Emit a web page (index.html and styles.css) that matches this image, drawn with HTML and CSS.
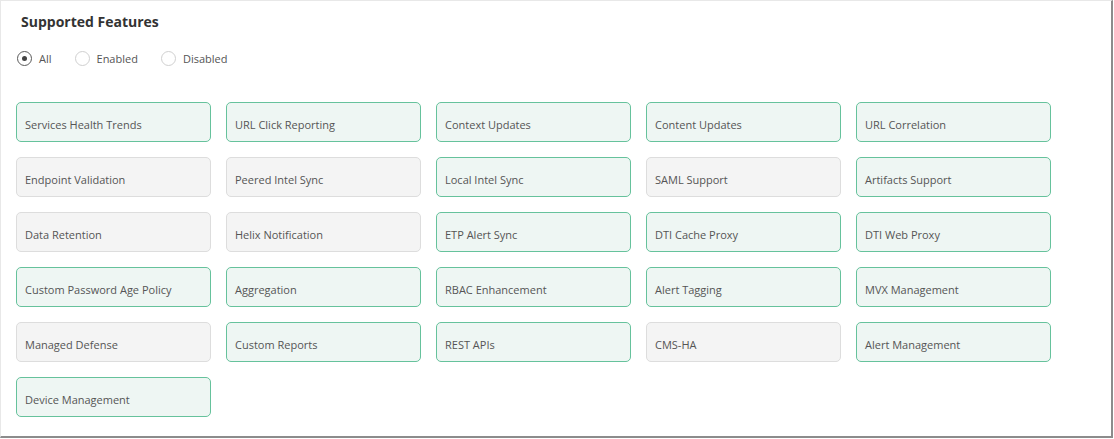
FILE: index.html
```html
<html>
<head>
    <title>Supported Features</title>
    <link rel="stylesheet" href="styles.css">
</head>
<body>
<div class="frame">
    <div class="title">Supported Features</div>
    <div class="filters">
        <label class="option"><span class="radio checked"></span>All</label>
        <label class="option"><span class="radio"></span>Enabled</label>
        <label class="option"><span class="radio"></span>Disabled</label>
    </div>
    <div class="features">
        <div class="feature on">Services Health Trends</div>
        <div class="feature on">URL Click Reporting</div>
        <div class="feature on">Context Updates</div>
        <div class="feature on">Content Updates</div>
        <div class="feature on">URL Correlation</div>

        <div class="feature off">Endpoint Validation</div>
        <div class="feature off">Peered Intel Sync</div>
        <div class="feature on">Local Intel Sync</div>
        <div class="feature off">SAML Support</div>
        <div class="feature on">Artifacts Support</div>

        <div class="feature off">Data Retention</div>
        <div class="feature off">Helix Notification</div>
        <div class="feature on">ETP Alert Sync</div>
        <div class="feature on">DTI Cache Proxy</div>
        <div class="feature on">DTI Web Proxy</div>

        <div class="feature on">Custom Password Age Policy</div>
        <div class="feature on">Aggregation</div>
        <div class="feature on">RBAC Enhancement</div>
        <div class="feature on">Alert Tagging</div>
        <div class="feature on">MVX Management</div>

        <div class="feature off">Managed Defense</div>
        <div class="feature on">Custom Reports</div>
        <div class="feature on">REST APIs</div>
        <div class="feature off">CMS-HA</div>
        <div class="feature on">Alert Management</div>

        <div class="feature on">Device Management</div>
    </div>
</div>
</body>
</html>
```

FILE: styles.css
```css
body {
    margin: 0;
    background-color: #ffffff;
    font-family: 'Open Sans', 'Liberation Sans', sans-serif;
    color: #555555;
}
.frame {
    box-sizing: border-box;
    width: 1113px;
    height: 438px;
    border-top: 1px solid #e8e8e8;
    border-left: 1px solid #e8e8e8;
    border-right: 2px solid #8c8c8c;
    border-bottom: 2px solid #8c8c8c;
    padding: 11px 0 0 15px;
}
.title {
    font-size: 14px;
    font-weight: 700;
    color: #333333;
    padding-left: 5px;
    line-height: 20px;
}
.filters {
    display: flex;
    align-items: center;
    gap: 23px;
    margin-top: 17px;
    height: 18px;
    padding-left: 1px;
}
.option {
    display: flex;
    align-items: center;
    gap: 7px;
    font-size: 11px;
    color: #555555;
}
.radio {
    box-sizing: border-box;
    width: 15px;
    height: 15px;
    border: 1px solid #d0d0d0;
    border-radius: 50%;
    display: flex;
    align-items: center;
    justify-content: center;
}
.radio.checked {
    border-color: #5a5a5a;
}
.radio.checked::after {
    content: "";
    width: 5px;
    height: 5px;
    border-radius: 50%;
    background-color: #444444;
}
.features {
    display: grid;
    grid-template-columns: repeat(5, 195px);
    grid-auto-rows: 40px;
    gap: 15px;
    margin-top: 35px;
}
.feature {
    box-sizing: border-box;
    display: flex;
    align-items: center;
    padding: 5px 8px 0 8px;
    border-radius: 5px;
    border: 1px solid;
    font-size: 11px;
    color: #555555;
}
.on {
    background-color: #eef6f3;
    border-color: #66c29c;
}
.off {
    background-color: #f4f4f4;
    border-color: #dddddd;
}
```
